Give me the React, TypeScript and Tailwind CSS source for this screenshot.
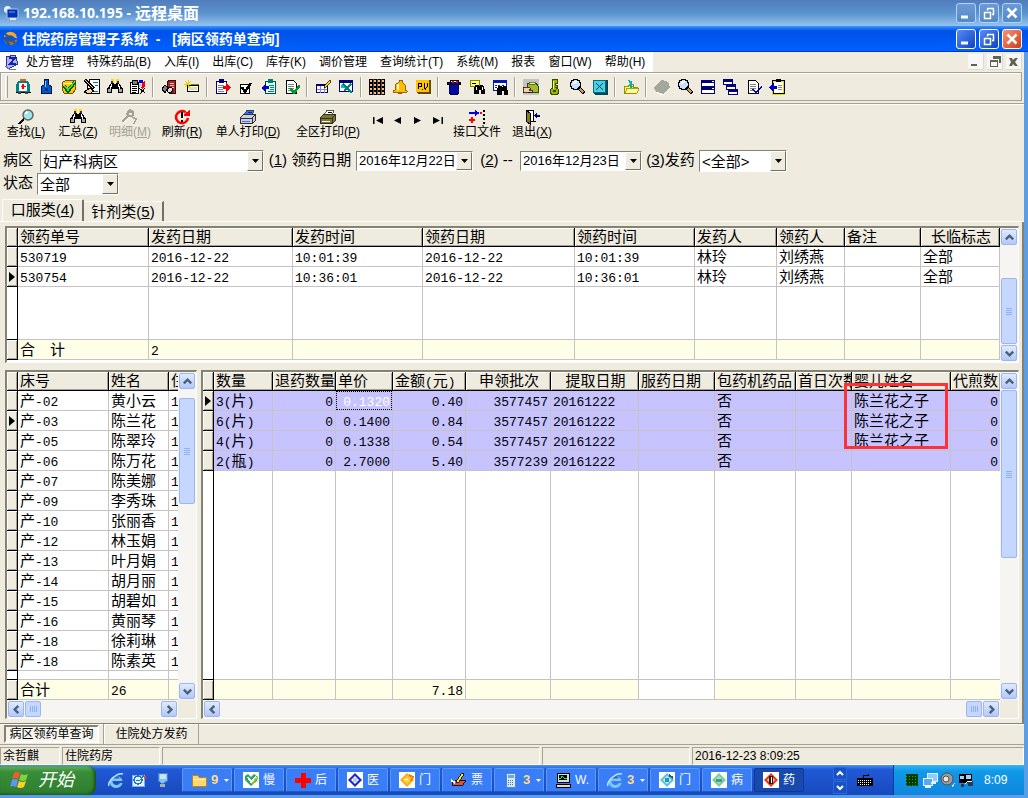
import { useState } from "react";
import type { ReactNode } from "react";
import clsx from "clsx";

const CJK = "font-['Liberation_Sans','Noto_Sans_CJK_SC',sans-serif]";

/* ---------- text helpers ---------- */

// latin runs are set in a narrower mono so they keep half the width of a han character
function Mixed({ text }: { text: string }) {
  return (
    <>
      {text.split(/([\x21-\x7e]+)/).map((part, i) =>
        i % 2 ? (
          <span key={i} className="font-['Liberation_Mono',monospace] text-[13px]">{part}</span>
        ) : (
          part
        )
      )}
    </>
  );
}

function Key({ text, k }: { text: string; k: string }) {
  return (
    <span>
      {text}(<u>{k}</u>)
    </span>
  );
}

/* ---------- icons ---------- */

function Ico({ children, className = "w-4 h-4" }: { children: ReactNode; className?: string }) {
  return (
    <svg viewBox="0 0 16 16" className={clsx("shrink-0", className)} shapeRendering="crispEdges" aria-hidden="true">
      {children}
    </svg>
  );
}

const sheet = (
  <>
    <path d="M2.500 1.500h7l3 3v10h-10z" fill="#fff" stroke="#000" />
    <path d="M4 5h6M4 7h6M4 9h6M4 11h5" stroke="#848284" />
  </>
);

const binoculars = (
  <>
    <path d="M4 0h3v4H4zM9 0h3v4H9z" fill="#ffdf00" />
    <path d="M4 2h2v2H4zM10 2h2v2h-2z" fill="#2930a5" />
    <path d="M4 4h3l1 2 1-2h3l4 6v4h-5v-4H5v4H0v-4z" fill="#000" />
    <path d="M5 5l-2 5M11 5l2 5" stroke="#fff" />
    <path d="M1 10h3v3H1zM12 10h3v3h-3z" fill="#a5a6b5" />
  </>
);

const magnifier = (
  <>
    <circle cx="6.500" cy="5.500" r="5" fill="#c6dfff" stroke="#000" strokeWidth="1.500" />
    <path d="M4 5l2-2h2" fill="none" stroke="#fff" strokeWidth="1.500" />
    <path d="M9.500 8.500l6 6" stroke="#000" strokeWidth="3.500" />
    <path d="M11 10l3.500 3.500" stroke="#ce9a63" strokeWidth="1.500" />
  </>
);

const icons: Record<string, ReactNode> = {
  急救: (
    <>
      <path d="M5 0h6v2H5z" fill="#f75500" />
      <path d="M3 2h10l2 4v7H1V6z" fill="#008284" />
      <path d="M4 4h8v8H4z" fill="#fff" />
      <path d="M8 5v5M5.500 7.500h5" stroke="#f00" strokeWidth="1.500" />
      <path d="M1 13h15v1H1z" fill="#000" />
      <path d="M3 13h3v2H3zM10 13h3v2h-3z" fill="#424142" />
    </>
  ),
  药瓶: (
    <>
      <path d="M6.500 0.500h4v5l3 2v7h-10v-7l3-2z" fill="#0059c6" stroke="#00104a" />
      <path d="M7 2h1v6H7z" fill="#8cc7ff" />
      <path d="M7 9h3v3H7z" fill="#00307b" />
    </>
  ),
  审核: (
    <>
      <path d="M1.500 3.500l3-2h10v9l-3 4h-8l-2-3z" fill="#ffc600" stroke="#735100" />
      <path d="M2 4h12" stroke="#fff7a5" />
      <path d="M3 7l4 5 7-9" fill="none" stroke="#005d00" strokeWidth="3.500" />
      <path d="M3.500 7l3.500 4 6.500-8" fill="none" stroke="#42db42" strokeWidth="1.500" />
    </>
  ),
  处方: (
    <>
      <path d="M5.500 0.500h10v14h-12v-6z" fill="#fff" stroke="#000" />
      <path d="M9 3h5M11 6h3M10 12h4" stroke="#008284" />
      <path d="M1 1l9 9" stroke="#000" strokeWidth="3" />
      <path d="M1.500 1.500l8 8" stroke="#ffdb63" />
      <path d="M0 13l6-4 4 3-5 3z" fill="#ffcf9c" stroke="#000" />
    </>
  ),
  检索: binoculars,
  药单: (
    <>
      <path d="M0.500 3.500h8v11h-8z" fill="#fff" stroke="#000" />
      <path d="M2 1h5v4H2z" fill="#848284" stroke="#000" />
      <path d="M2 7h5M2 9h5M2 11h5M2 13h4" stroke="#000" />
      <path d="M9 1h4v3h-4z" fill="#00f" />
      <path d="M10 6l5-4v6l-3 2z" fill="#f00" />
      <path d="M9 9l6 5M15 9l-5 6" stroke="#000" />
      <path d="M9 5h3v3H9z" fill="#adcfef" />
    </>
  ),
  查册: (
    <>
      <path d="M8 1h6v13H8l-2-3V4z" fill="#9c2829" stroke="#420000" />
      <path d="M9 4h4M9 6h4M9 8h4" stroke="#ffb6b5" />
      <path d="M1 10l3-4 3 3-3 5z" fill="#848284" stroke="#000" />
      <circle cx="9" cy="11" r="2.500" fill="#dedfde" stroke="#000" />
    </>
  ),
  新建: (
    <>
      <path d="M3.500 6.500h11v6h-11z" fill="#fff" stroke="#000" />
      <path d="M5 8h8v3H5z" fill="#dedfbd" />
      <path d="M4 1v8M0 5h7M1 2l5 6M7 2L1 8" stroke="#e7cf00" />
      <path d="M7 5h8" stroke="#848200" />
    </>
  ),
  出库单: (
    <>
      <path d="M1.500 2.500h10v12h-10z" fill="#fff" stroke="#00007b" strokeWidth="1.500" />
      <path d="M4 0h5v4H4z" fill="#00007b" />
      <path d="M3 6h6M3 8h5M3 10h5M3 12h6" stroke="#848284" />
      <path d="M8 7h3V4l5 5-5 4v-3H8z" fill="#f00008" />
    </>
  ),
  确认: (
    <>
      <path d="M2.500 5.500h9v9h-9z" fill="#fff" stroke="#000" />
      <path d="M4 8l3 5 6-9" fill="none" stroke="#000" strokeWidth="2.500" />
    </>
  ),
  入库单: (
    <>
      <path d="M4.500 2.500h10v12h-10z" fill="#deffef" stroke="#00514a" strokeWidth="1.500" />
      <path d="M7 0h5v4H7z" fill="#007b73" />
      <path d="M8 6h5M9 8h4M9 10h4M7 12h6" stroke="#008284" />
      <path d="M8 7H5V4L0 9l5 4v-3h3z" fill="#0000bd" />
    </>
  ),
  验收: (
    <>
      {sheet}
      <path d="M6 9l4 5 6-8" fill="none" stroke="#009a29" strokeWidth="2.500" />
    </>
  ),
  编辑表: (
    <>
      <path d="M1.500 5.500h11v8h-11z" fill="#fff" stroke="#00007b" strokeWidth="1.500" />
      <path d="M1 5h12v2H1z" fill="#00007b" />
      <path d="M2 10h10M5 7v7M9 7v7" stroke="#8486c6" />
      <path d="M9 9l1-3 5-5 1 2-5 5z" fill="#ffd700" stroke="#000" strokeWidth=".7" />
    </>
  ),
  绘图: (
    <>
      <path d="M1.500 2.500h13v10h-13z" fill="#fff" stroke="#00007b" />
      <path d="M1 1h14v3H1z" fill="#00007b" />
      <path d="M3 6h4v3H3z" fill="#00c3c6" />
      <path d="M5 5l9 9M13 5l-7 7" stroke="#008284" strokeWidth="2" />
    </>
  ),
  网格: (
    <>
      <path d="M0 0h16v16H0z" fill="#000" />
      {[1, 5, 9, 13].map((y) => (
        <path key={y} d={`M1 ${y}h2v2H1zM5 ${y}h2v2H5zM9 ${y}h2v2H9zM13 ${y}h2v2h-2z`} fill="#ffbe6b" />
      ))}
      <path d="M4 0v16M8 0v16M12 0v16" stroke="#848284" strokeWidth=".6" />
    </>
  ),
  提醒: (
    <>
      <path d="M7 1h3v2l3 3v5l2 1v1H1v-1l2-1V6l4-3z" fill="#ffbe00" stroke="#7b4900" strokeWidth=".8" />
      <path d="M6 5v6" stroke="#fff7bd" strokeWidth="1.500" />
      <path d="M6 13h4v2H6z" fill="#a55900" />
    </>
  ),
  价格: (
    <>
      <path d="M1 1h15v14H3l-2-2z" fill="#634900" />
      <path d="M1 1h13v12H1z" fill="#ffc300" />
      <path d="M3 10V4h3v3H3M9 4v4l1.500 2L12 8V4M7 10h1" fill="none" stroke="#000" />
    </>
  ),
  回收: (
    <>
      <path d="M3 5h10l-1 10H4z" fill="#0008a5" stroke="#000042" />
      <path d="M1.500 3.500h13v2h-13z" fill="#0008a5" stroke="#000" />
      <path d="M4 1h8v2H4z" fill="#fff" stroke="#000" />
      <path d="M6 2h2v2H6zM10 2h2v2h-2z" fill="#f00" />
    </>
  ),
  查药: (
    <>
      <path d="M1.500 1.500h9v6h-9z" fill="#ffff7b" stroke="#848200" />
      <path d="M3 4h4" stroke="#000" />
      <path d="M6 6h3l1 1 1-1h3l2 5v4h-4v-4h-2v4H5v-5z" fill="#000" />
      <path d="M7 8v3M13 8v3" stroke="#fff" />
    </>
  ),
  查表: (
    <>
      <path d="M1.500 1.500h13v10h-13z" fill="#fff" stroke="#0018bd" />
      <path d="M1 1h14v3H1z" fill="#0018bd" />
      <path d="M3 6h2M6 6h2M10 6h2M3 8h2" stroke="#0018bd" />
      <path d="M6 7h3l1 1 1-1h3l2 5v4h-4v-4h-2v4H5v-5z" fill="#000" />
    </>
  ),
  付款: (
    <>
      <path d="M0 0h16v16H0z" fill="#c6c3c6" />
      <path d="M4 4h9l2 3v6H5z" fill="#a5b631" stroke="#314900" />
      <path d="M6 3h6v2H6z" fill="#e7ef9c" stroke="#314900" strokeWidth=".6" />
      <path d="M0 8h5l3 2-2 1h3v2H3l-3 1z" fill="#ffcf9c" stroke="#000" strokeWidth=".7" />
    </>
  ),
  钥匙: (
    <>
      <path d="M6 0.500h5v4H9.500v2H11v2H9.500l3 2v4l-2 1H6l-2-2v-3l2-1z" fill="#9cb600" stroke="#394900" />
      <path d="M7 2v8" stroke="#efff7b" />
      <path d="M7 11h3v2H7z" fill="#394900" />
    </>
  ),
  搜索: magnifier,
  关闭表: (
    <>
      <path d="M1 1h15v15H3l-2-2z" fill="#004952" />
      <path d="M1.500 1.500h12v12h-12z" fill="#4acfe7" stroke="#006d7b" />
      <path d="M4 4l7 7M11 4l-7 7" stroke="#003952" />
    </>
  ),
  打开: (
    <>
      <path d="M1.500 7.500h4l1-2h4v3h4l-2 6h-11z" fill="#ffff5a" stroke="#948e00" />
      <path d="M2 14l2-5h12l-2 5z" fill="#fff79c" stroke="#948e00" strokeWidth=".8" />
      <path d="M5 1l4 1v5l2-1-3 4-2-4h2z" fill="#00aec6" />
    </>
  ),
  停用: (
    <>
      <path d="M0 8l8-7 6 2 2 5-7 7-8-3z" fill="#a5a69c" />
      <path d="M1 13l8 3 7-7" fill="none" stroke="#fff" />
    </>
  ),
  平铺: (
    <>
      <path d="M1.500 1.500h13v6h-13zM1.500 8.500h13v6h-13z" fill="#fff" stroke="#00007b" />
      <path d="M1 1h14v3H1zM1 8h14v3H1z" fill="#00007b" />
      <path d="M12 2h2M12 9h2" stroke="#fff" />
    </>
  ),
  层叠: (
    <>
      {[0, 1, 2].map((n) => (
        <g key={n} transform={`translate(${n * 2.5} ${n * 5})`}>
          <path d="M.5 0.500h9v5h-9z" fill="#fff" stroke="#00007b" />
          <path d="M0 0h10v3H0z" fill="#00007b" />
        </g>
      ))}
    </>
  ),
  完成: (
    <>
      {sheet}
      <path d="M7 10l3 4 6-7" fill="none" stroke="#0000bd" strokeWidth="1.500" />
    </>
  ),
  导入: (
    <>
      <path d="M4 2h11v13H4z" fill="#fff" stroke="#dede00" strokeWidth="2" />
      <path d="M3.500 5V1.500h12v13H4V12" fill="none" stroke="#000" />
      <path d="M7 0h5v3H7z" fill="#000" />
      <path d="M9 6h4M9 8h4M9 10h4" stroke="#848284" />
      <path d="M8 7H5V4L0 8.500 5 13v-3h3z" fill="#0000bd" />
    </>
  ),
};

const toolGroups = [
  ["急救", "药瓶", "审核", "处方", "检索", "药单"],
  ["查册", "新建"],
  ["出库单", "确认", "入库单", "验收"],
  ["编辑表", "绘图"],
  ["网格", "提醒", "价格"],
  ["回收", "查药", "查表"],
  ["付款", "钥匙", "搜索", "关闭表"],
  ["打开"],
  ["停用", "搜索", "平铺", "层叠", "完成", "导入"],
];

const printer = (body: string, paper: string, ink: string) => (
  <>
    <path d="M4 6l3-5h7l-2 5z" fill={paper} stroke="#31302a" strokeWidth=".8" />
    <path d="M8 3h4M7 5h4" stroke={ink} />
    <path d="M0.500 8.500l3-3h12v6l-3 3h-12z" fill={body} stroke="#31302a" />
    <path d="M1 9h11l3-3M12.500 9v5" fill="none" stroke="#31302a" />
    <path d="M2 12h8" stroke={paper} />
  </>
);

const actions = {
  find: (
    <>
      <circle cx="10" cy="6" r="5" fill="#9ce7e7" stroke="#636163" strokeWidth="1.500" shapeRendering="auto" />
      <path d="M7 5l2-2" stroke="#fff" strokeWidth="1.500" />
      <path d="M6 9.500L1 15" stroke="#000" strokeWidth="2" />
    </>
  ),
  detail: (
    <>
      <path d="M5 2l3-2 4 2v5l-2 1H6L4 6z" fill="#a5a294" />
      <path d="M7 4h3v2H7z" fill="#efebde" />
      <path d="M6 7l-6 6M10 8l4 2-2 5" fill="none" stroke="#a5a294" strokeWidth="1.500" />
      <path d="M1 14l6-5M13 15h2" stroke="#fff" />
    </>
  ),
  refresh: (
    <>
      <path d="M11.500 3.200A6 6 0 1 0 14 9" fill="none" stroke="#f00" strokeWidth="2.500" shapeRendering="auto" />
      <path d="M10 5.500L15.500 1v6h-5z" fill="#f00" />
      <path d="M6.500 3h3L8.500 9h-1zM7 10.500h2v2H7z" fill="#000" />
    </>
  ),
  port: (
    <>
      <path d="M0 4h7" stroke="#00f" strokeWidth="2" />
      <path d="M6 1l5 3-5 3z" fill="#00f" />
      <path d="M14.500 1v15" stroke="#000" strokeWidth="2" strokeDasharray="2 2" />
      <path d="M11 3h2v2h-2z" fill="#f00" />
      <path d="M3 8v6M0 11h6" stroke="#f00" strokeWidth="2" />
    </>
  ),
  exit: (
    <>
      <path d="M2.500 1.500h7v11h-7z" fill="#fff" stroke="#000" />
      <path d="M2.500 1.500l4 3v11l-4-3z" fill="#848200" stroke="#000" />
      <path d="M8 12.500h4" stroke="#000" />
      <path d="M10 6.500l3-3v2h3v2h-3v2z" fill="#00007b" />
    </>
  ),
};

/* ---------- window chrome ---------- */

function Caption({ kind, tone }: { kind: "min" | "max" | "close"; tone: string }) {
  return (
    <button aria-label={kind} className={clsx("w-5 h-5 rounded-[3px] border flex items-center justify-center", tone)}>
      <svg viewBox="0 0 14 14" className="w-[14px] h-[14px]" fill="none" stroke="#fff" aria-hidden="true">
        {kind === "min" && <path d="M2 11h7" strokeWidth="3" />}
        {kind === "max" && (
          <>
            <path d="M2 6.500h7M2.500 6v6.500h6V6" strokeWidth="1.500" />
            <path d="M5 2.500h7M11.500 3v5.500H10M5.500 3v1.500" strokeWidth="1.500" />
          </>
        )}
        {kind === "close" && <path d="M2.500 2.500l9 9M11.500 2.500l-9 9" strokeWidth="2.500" />}
      </svg>
    </button>
  );
}

function Titles() {
  const glass = "border-[#b5d3f7] bg-linear-to-b from-[#6b9ad6] to-[#528ac6]";
  const blue = "border-white bg-linear-to-br from-[#5a8af7] to-[#0841c6]";
  return (
    <>
      <div className="h-[26px] flex items-center pl-[3px] pr-1.5 bg-linear-to-b from-[#527dbd] via-[#5a92ce] to-[#94c3ef]">
        <svg viewBox="0 0 16 16" className="w-4 h-4 mr-1 shrink-0" aria-hidden="true">
          <circle cx="4.500" cy="4.500" r="3.500" fill="#e7f3ff" />
          <rect x="4" y="4" width="11" height="9" rx="1" fill="#0030b5" stroke="#b5c7e7" />
          <path d="M6 7h6" stroke="#5aa6ff" />
          <path d="M7 14h6" stroke="#e7e7e7" strokeWidth="2" />
        </svg>
        <h1 className="flex-1 text-white font-bold text-[14px] font-['Noto_Sans','Noto_Sans_CJK_SC',sans-serif] leading-6 flex items-center gap-1">
          <span>192.168.10.195 -</span>
          <span className="text-[16px]">远程桌面</span>
        </h1>
        <div className="flex gap-[3px]">
          <Caption kind="min" tone={glass} />
          <Caption kind="max" tone={glass} />
          <Caption kind="close" tone={glass} />
        </div>
      </div>
      <div className="h-[26px] flex items-center pl-[3px] pr-1.5 bg-linear-to-b from-[#3994ff] via-[#0051e7] via-20% to-[#0061ff] border-b border-[#0038bd]">
        <svg viewBox="0 0 16 16" className="w-[15px] h-[15px] mr-1 shrink-0" aria-hidden="true">
          <path d="M1 6a7 6 0 0 1 13-2l1 4-3-1a5 5 0 0 0-8-1z" fill="#ffa621" />
          <path d="M15 9A7 6 0 0 1 2 12L1 8l3 1a5 5 0 0 0 8 1z" fill="#c66b10" />
          <path d="M2 3l11 10M1 7l6 8" stroke="#29598c" strokeWidth="2.500" />
        </svg>
        <h2 className="flex-1 text-white font-bold text-[14px] leading-6 whitespace-pre">
          住院药房管理子系统{"  -   "}[病区领药单查询]
        </h2>
        <div className="flex gap-[3px]">
          <Caption kind="min" tone={blue} />
          <Caption kind="max" tone={blue} />
          <Caption kind="close" tone="border-white bg-linear-to-br from-[#f79273] to-[#ce3810]" />
        </div>
      </div>
    </>
  );
}

const menu: [string, string?][] = [
  ["处方管理"],
  ["特殊药品", "B"],
  ["入库", "I"],
  ["出库", "C"],
  ["库存", "K"],
  ["调价管理"],
  ["查询统计", "T"],
  ["系统", "M"],
  ["报表"],
  ["窗口", "W"],
  ["帮助", "H"],
];

function MenuBar() {
  return (
    <nav className="h-5 flex items-center justify-between text-[12px] leading-5">
      <div className="bg-white flex items-center h-5 pl-1 pr-2">
        <Ico className="w-4 h-4 mr-1.5">
          <path d="M2 3l9-2 3 9-10 5-2-4z" fill="#adb6ff" stroke="#2930a5" />
          <path d="M5 4h6l-5 6h6" fill="none" stroke="#1820a5" strokeWidth="2" />
          <path d="M1 12l4 3h7" fill="none" stroke="#6b71c6" />
        </Ico>
        <div className="flex gap-[13px]">
          {menu.map(([text, key]) => (
            <button key={text} className="whitespace-nowrap">
              {key ? `${text}(${key})` : text}
            </button>
          ))}
        </div>
      </div>
      <div className="flex gap-[3px] pr-0.5">
        {["M3 10h6v2H3z", "M3 6h8v7H3zM4 8v4h6V8zM6 2h8v7h-2V5H6z", "M3 4h3l1 2 2-2h3L9 8l3 4H9L7 10l-1 2H3l2-4z"].map((d) => (
          <button key={d} aria-label="子窗口" className="w-4 h-4 bg-[#f7f7f7] border-r border-b border-[#dedbce]">
            <svg viewBox="0 0 15 15" className="w-[15px] h-[15px]" fill="#636152" fillRule="evenodd" aria-hidden="true">
              <path d={d} />
            </svg>
          </button>
        ))}
      </div>
    </nav>
  );
}

function ToolBar() {
  return (
    <div className="mr-0.5 border border-[#a5a294] shadow-[inset_1px_1px_0_#fff] h-[29px] flex items-center pl-1">
      <span className="w-[3px] h-[22px] border-l border-white border-r border-r-[#a5a294] mr-[3px]" />
      {toolGroups.map((group, g) => (
        <div key={g} className="flex items-center">
          {g > 0 && (
            <span className="w-2 h-5 flex justify-center">
              <span className="w-0.5 border-l border-[#a5a294] border-r border-r-white" />
            </span>
          )}
          {group.map((name) => (
            <button key={name} aria-label={name} className="w-[23px] h-5 flex items-center justify-center">
              <Ico>{icons[name]}</Ico>
            </button>
          ))}
        </div>
      ))}
    </div>
  );
}

function Action({ icon, children, className, disabled }: { icon: ReactNode; children: ReactNode; className: string; disabled?: boolean }) {
  return (
    <button
      disabled={disabled}
      className={clsx("flex flex-col items-center text-[12px] leading-[14px] whitespace-nowrap disabled:text-[#a5a294]", className)}
    >
      <Ico>{icon}</Ico>
      {children}
    </button>
  );
}

function ActionBar() {
  return (
    <div className="mt-0.5 border-t border-[#a5a294] shadow-[inset_0_1px_0_#fff] flex items-center pt-0.5 h-[38px]">
      <Action className="w-[52px]" icon={actions.find}><Key text="查找" k="L" /></Action>
      <Action className="w-[52px]" icon={binoculars}><Key text="汇总" k="Z" /></Action>
      <Action className="w-[52px]" icon={actions.detail} disabled><Key text="明细" k="M" /></Action>
      <Action className="w-[52px]" icon={actions.refresh}><Key text="刷新" k="R" /></Action>
      <Action className="w-20" icon={printer("#c6cfe7", "#3971e7", "#0028a5")}><Key text="单人打印" k="D" /></Action>
      <Action className="w-20" icon={printer("#7b7929", "#fff", "#000")}><Key text="全区打印" k="P" /></Action>
      {["M0 1h1.500v7H0zM10 1v7L3 4.500z", "M8 1v7L1 4.500z", "M1 1v7l7-3.500z", "M0 1v7l7-3.500zM8.500 1H10v7H8.500z"].map((d, i) => (
        <button key={d} aria-label={["首条", "上条", "下条", "末条"][i]} className="w-5 h-6 flex items-start justify-center">
          <svg viewBox="0 0 10 9" className="w-[10px] h-[9px] mt-1" aria-hidden="true"><path d={d} /></svg>
        </button>
      ))}
      <Action className="w-[58px]" icon={actions.port}>接口文件</Action>
      <Action className="w-[52px]" icon={actions.exit}><Key text="退出" k="X" /></Action>
    </div>
  );
}

/* ---------- filters ---------- */

const sunken = "border border-[#848273] border-r-white border-b-white bg-white";

function Arrow() {
  return (
    <span className="w-4 h-full bg-[#efebde] border border-white border-r-[#737163] border-b-[#737163] flex items-center justify-center">
      <svg viewBox="0 0 7 4" className="w-[7px] h-1" aria-hidden="true"><path d="M0 0h7L3.500 4z" /></svg>
    </span>
  );
}

function Combo({ id, options, className }: { id: string; options: string[]; className: string }) {
  return (
    <div className={clsx("relative h-[22px]", sunken, className)}>
      <select id={id} className="appearance-none w-full h-5 pl-0.5 leading-5 text-[15px] bg-transparent outline-none">
        {options.map((o) => <option key={o}>{o}</option>)}
      </select>
      <div className="absolute right-0 inset-y-0 pointer-events-none"><Arrow /></div>
    </div>
  );
}

function DateBox({ id, value, className }: { id: string; value: string; className: string }) {
  const [date, setDate] = useState(value);
  return (
    <div className={clsx("h-5 flex", sunken, className)}>
      <input
        id={id}
        value={date}
        onChange={(e) => setDate(e.target.value)}
        className="flex-1 min-w-0 pl-0.5 text-[13px] leading-4 outline-none"
      />
      <button aria-label="选择日期" className="h-full"><Arrow /></button>
    </div>
  );
}

function Filters() {
  return (
    <form className="px-[3px] pt-2 text-[15px] whitespace-nowrap" onSubmit={(e) => e.preventDefault()}>
      <div className="flex items-center h-[23px]">
        <label htmlFor="ward" className="w-[37px]">病区</label>
        <Combo id="ward" options={["妇产科病区", "内科病区"]} className="w-[224px]" />
        <label htmlFor="from" className="w-[92px] text-center">(<u>1</u>) 领药日期</label>
        <DateBox id="from" value="2016年12月22日" className="w-[117px]" />
        <label htmlFor="to" className="w-[47px] text-center">(<u>2</u>) --</label>
        <DateBox id="to" value="2016年12月23日" className="w-[122px]" />
        <label htmlFor="sent" className="w-[57px] text-center">(<u>3</u>)发药</label>
        <Combo id="sent" options={["<全部>", "<已发>"]} className="w-[88px]" />
      </div>
      <div className="flex items-center h-[23px]">
        <label htmlFor="state" className="w-[34px]">状态</label>
        <Combo id="state" options={["全部", "在院"]} className="w-[82px]" />
      </div>
    </form>
  );
}

function Tabs() {
  return (
    <div className="flex items-end h-[27px] pl-0.5 text-[15px] leading-[18px] border-b border-white" role="tablist">
      <button role="tab" aria-selected="true" className="w-[82px] h-[22px] pb-0.5 rounded-t-xs border-t border-l border-white border-r-2 border-r-[#737163]">
        口服类(<u>4</u>)
      </button>
      <button role="tab" aria-selected="false" className="w-20 h-5 border-t border-white border-r-2 border-r-[#737163]">
        针剂类(<u>5</u>)
      </button>
    </div>
  );
}

/* ---------- grids ---------- */

type Col = { title: string; w: string; align?: string; head?: string; noSum?: boolean };

function Chevron({ dir }: { dir: "up" | "down" | "left" | "right" }) {
  const d = { up: "M1.500 6L4.500 3l3 3", down: "M1.500 3l3 3 3-3", left: "M6 1.500L3 4.500l3 3", right: "M3 1.500l3 3-3 3" }[dir];
  return (
    <button
      aria-label={dir}
      className="w-4 h-4 m-px shrink-0 rounded-xs border border-[#9cb6ef] bg-linear-to-b from-[#deebff] to-[#b5c7f7] flex items-center justify-center"
    >
      <svg viewBox="0 0 9 9" className="w-[11px] h-[11px]" fill="none" stroke="#4a617b" strokeWidth="2" aria-hidden="true">
        <path d={d} />
      </svg>
    </button>
  );
}

function VScroll({ gap, thumb }: { gap: string; thumb: string }) {
  return (
    <div className="w-[18px] shrink-0 flex flex-col bg-[#f7f5f2]">
      <Chevron dir="up" />
      <div className={gap} />
      <div className={clsx("mx-px w-4 rounded-xs border border-[#9cb6ef] bg-[#c6d7ff] flex flex-col gap-px items-center justify-center", thumb)}>
        {[0, 1, 2, 3].map((n) => <span key={n} className="w-1.5 h-px bg-[#8cb2f7]" />)}
      </div>
      <div className="flex-1" />
      <Chevron dir="down" />
    </div>
  );
}

function HThumb() {
  return (
    <div className="w-4 h-4 my-px rounded-xs border border-[#9cb6ef] bg-[#c6d7ff] flex gap-px items-center justify-center">
      {[0, 1, 2, 3].map((n) => <span key={n} className="w-px h-1.5 bg-[#8cb2f7]" />)}
    </div>
  );
}

const rowHead = "bg-[#efebde] border-r border-b border-black shadow-[inset_1px_1px_0_#fff,inset_-1px_-1px_0_#a5a294]";
const cellBase = "p-0 border-r border-b border-[#c6c3c6]";
const cellText = "h-[19px] px-0.5 leading-[19px] overflow-hidden whitespace-pre";

function Grid({
  cols, rows, sums, current, filler, selected, focus,
}: {
  cols: Col[];
  rows: string[][];
  sums: string[];
  current: number;
  filler: string;
  selected?: boolean;
  focus?: number;
}) {
  return (
    <div className="flex-1 min-w-0 overflow-hidden">
      <table className="table-fixed w-px border-separate border-spacing-0 text-[15px] text-left">
        <colgroup>
          <col className="w-[11px]" />
          {cols.map((c, i) => <col key={i} className={c.w} />)}
        </colgroup>
        <thead>
          <tr>
            <th className={clsx("p-0", rowHead)} aria-label="当前行" />
            {cols.map((c, i) => (
              <th key={i} className={clsx("p-0 font-normal", rowHead, c.head)}>
                <div className="h-[18px] pl-0.5 leading-[18px] overflow-hidden whitespace-nowrap">
                  <Mixed text={c.title} />
                </div>
              </th>
            ))}
          </tr>
        </thead>
        <tbody>
          {rows.map((row, r) => (
            <tr key={r} className={selected ? "bg-[#c6c3ff]" : "bg-white"}>
              <th className={clsx("p-0", rowHead)} aria-label={r === current ? "当前" : "行"}>
                {r === current && (
                  <svg viewBox="0 0 6 10" className="w-1.5 h-[10px] mx-auto" aria-hidden="true"><path d="M0 0v10l6-5z" /></svg>
                )}
              </th>
              {row.map((v, c) => (
                <td key={c} className={clsx(cellBase, cols[c].align)}>
                  <div className={clsx(cellText, r === current && c === focus && "text-white outline outline-dotted -outline-offset-1 outline-black")}>
                    <Mixed text={v} />
                  </div>
                </td>
              ))}
            </tr>
          ))}
          <tr className="bg-white">
            <td className={clsx("p-0 border-r border-black border-b", filler)} />
            {cols.map((_, i) => <td key={i} className="p-0 border-r border-b border-[#c6c3c6]" />)}
          </tr>
        </tbody>
        <tfoot>
          <tr className="bg-[#ffffe7]">
            <td className={clsx("p-0", rowHead)} />
            {cols.map((c, i) => (
              <td key={i} className={clsx(cellBase, c.align, c.noSum && "bg-white")}>
                <div className={cellText}><Mixed text={sums[i] ?? ""} /></div>
              </td>
            ))}
          </tr>
        </tfoot>
      </table>
    </div>
  );
}

const orderCols: Col[] = [
  { title: "领药单号", w: "w-[131px]" },
  { title: "发药日期", w: "w-[144px]" },
  { title: "发药时间", w: "w-[130px]" },
  { title: "领药日期", w: "w-[152px]" },
  { title: "领药时间", w: "w-[120px]" },
  { title: "发药人", w: "w-[82px]" },
  { title: "领药人", w: "w-[68px]" },
  { title: "备注", w: "w-[76px]" },
  { title: "长临标志", w: "w-[79px]", head: "text-center" },
];

const orders = [
  ["530719", "2016-12-22", "10:01:39", "2016-12-22", "10:01:39", "林玲", "刘绣燕", "", "全部"],
  ["530754", "2016-12-22", "10:36:01", "2016-12-22", "10:36:01", "林玲", "刘绣燕", "", "全部"],
];

const bedCols: Col[] = [
  { title: "床号", w: "w-[91px]" },
  { title: "姓名", w: "w-[60px]" },
  { title: "住", w: "w-[12px]" },
];

const beds = [
  ["产-02", "黄小云"], ["产-03", "陈兰花"], ["产-05", "陈翠玲"], ["产-06", "陈万花"], ["产-07", "陈美娜"],
  ["产-09", "李秀珠"], ["产-10", "张丽香"], ["产-12", "林玉娟"], ["产-13", "叶月娟"], ["产-14", "胡月丽"],
  ["产-15", "胡碧如"], ["产-16", "黄丽琴"], ["产-18", "徐莉琳"], ["产-18", "陈素英"],
].map((b) => [...b, "1"]);

const drugCols: Col[] = [
  { title: "数量", w: "w-[59px]" },
  { title: "退药数量", w: "w-[63px]", align: "text-right" },
  { title: "单价", w: "w-[57px]", align: "text-right" },
  { title: "金额(元)", w: "w-[73px]", align: "text-right" },
  { title: "申领批次", w: "w-[85px]", align: "text-right", head: "text-center" },
  { title: "提取日期", w: "w-[88px]", head: "text-center" },
  { title: "服药日期", w: "w-[76px]", noSum: true },
  { title: "包药机药品", w: "w-[81px]" },
  { title: "首日次数", w: "w-[56px]" },
  { title: "婴儿姓名", w: "w-[99px]" },
  { title: "代煎数", w: "w-[50px]", align: "text-right" },
];

const drugs = [
  ["3(片)", "0", "0.1320", "0.40", "3577457", "20161222", "", "否", "", "陈兰花之子", "0"],
  ["6(片)", "0", "0.1400", "0.84", "3577457", "20161222", "", "否", "", "陈兰花之子", "0"],
  ["4(片)", "0", "0.1338", "0.54", "3577457", "20161222", "", "否", "", "陈兰花之子", "0"],
  ["2(瓶)", "0", "2.7000", "5.40", "3577239", "20161222", "", "否", "", "", "0"],
];

const frame = "border-t-2 border-l-2 border-[#848273] border-r border-b border-r-white border-b-white";

function Grids() {
  return (
    <div className="border-r-2 border-[#848273] pl-[5px] pr-[3px] pt-1 pb-1 shrink-0">
      <div className={clsx("flex bg-white", frame)}>
        <Grid cols={orderCols} rows={orders} sums={["合　计", "2"]} current={1} filler="h-[53px]" />
        <VScroll gap="h-8" thumb="h-[66px]" />
      </div>
      <div className="flex gap-1 pt-[7px]">
        <div className={clsx("w-[192px] bg-white", frame)}>
          <div className="flex">
            <Grid cols={bedCols} rows={beds} sums={["合计", "26"]} current={1} filler="h-[9px]" />
            <VScroll gap="h-2" thumb="h-[106px]" />
          </div>
          <div className="flex h-[18px] bg-[#f7f5f2]">
            <Chevron dir="left" />
            <HThumb />
            <div className="flex-1" />
            <Chevron dir="right" />
            <div className="w-[18px] bg-[#efebde]" />
          </div>
        </div>
        <div className={clsx("relative flex-1 min-w-0 bg-white", frame)}>
          <div className="flex">
            <Grid cols={drugCols} rows={drugs} sums={["", "", "", "7.18"]} current={0} filler="h-[209px]" selected focus={2} />
            <VScroll gap="" thumb="h-[168px]" />
          </div>
          <div className="absolute left-[641px] top-[11px] w-[104px] h-[66px] border-[3px] border-[#ff3038]" />
          <div className="flex h-[18px] bg-[#f7f5f2]">
            <Chevron dir="left" />
            <div className="flex-1" />
            <HThumb />
            <Chevron dir="right" />
            <div className="w-[18px] bg-[#efebde]" />
          </div>
        </div>
      </div>
    </div>
  );
}

/* ---------- bottom bars ---------- */

function WindowTabs() {
  return (
    <div className="h-[22px] border-t border-[#848273] shadow-[inset_0_1px_0_#fff] border-b border-b-[#a5a294] flex items-center text-[12px] leading-4 pl-1">
      <button className="w-[95px] h-[18px] bg-[#f7f5ef] border-2 border-[#848273] border-r-white border-b-white leading-[14px] whitespace-nowrap">
        病区领药单查询
      </button>
      <span className="w-0.5 h-5 ml-1 border-l border-[#a5a294] border-r border-r-white" />
      <button className="w-[94px] h-5 border-r border-[#a5a294]">住院处方发药</button>
    </div>
  );
}

function StatusBar() {
  const cell = "border border-[#a5a294] border-r-white border-b-white px-0.5 whitespace-nowrap";
  return (
    <div className="h-5 pt-0.5 flex gap-0.5 text-[12px] leading-4">
      <span className={clsx("w-[60px]", cell)}>余哲麒</span>
      <span className={clsx("w-[98px]", cell)}>住院药房</span>
      <span className={clsx("w-[378px]", cell)} />
      <span className={clsx("w-[148px]", cell)} />
      <span className={clsx("flex-1", cell)}>2016-12-23 8:09:25</span>
    </div>
  );
}

const ie = (
  <g shapeRendering="auto">
    <path d="M13 9H4.500a4 4 0 0 0 7.500 2h2.500A6.500 6 0 1 1 14.500 9z" fill="#7bc7ff" />
    <path d="M5 6.500h6.500a3.300 3 0 0 0-6.500 0z" fill="#2961c6" />
    <path d="M1 14C-1 10 9 0 15 2" fill="none" stroke="#bde3ff" strokeWidth="1.500" />
  </g>
);

const diamond = (a: string, b: string) => (
  <>
    <path d="M0 0h16v16H0z" fill="#fff" />
    <g shapeRendering="auto">
      <path d="M8 1l7 7-7 7-7-7z" fill={a} />
      <path d="M8 4l4 4-4 4-4-4z" fill={b} />
    </g>
  </>
);

const tasks: { icon: ReactNode; text: string; count?: boolean; active?: boolean }[] = [
  {
    text: "9", count: true,
    icon: <><path d="M1 3h6l1 2h7v9H1z" fill="#ffd76b" stroke="#b58621" /><path d="M2 7h12" stroke="#fff3c6" /></>,
  },
  {
    text: "慢",
    icon: <><path d="M0 0h16v16H0z" fill="#fff" /><path d="M8 14L2 8V4l3-2 3 3 3-3 4 3-1 4z" fill="#29a663" shapeRendering="auto" /><path d="M5 5l3 5 5-5" fill="none" stroke="#fff" strokeWidth="2" /><path d="M9 12l5-6" stroke="#8cc731" strokeWidth="2" /></>,
  },
  { text: "后", icon: <path d="M6 1h5v5h5v5h-5v5H6v-5H0V6h6z" fill="#f00" /> },
  { text: "医", icon: <>{diamond("#2128c6", "#fff")}<circle cx="8" cy="8" r="2.500" fill="#b5cfff" /></> },
  { text: "门", icon: <>{diamond("#ffae10", "#ffd242")}<path d="M10 3l4 2-2 4" fill="none" stroke="#e78200" strokeWidth="2" /><path d="M5 7h4" stroke="#fff" /></> },
  {
    text: "票",
    icon: <><path d="M1 11l5-3h9l-3 5H1z" fill="#de5131" stroke="#000" strokeWidth=".8" /><path d="M6 8l5-7 2 1-5 8-3 1z" fill="#ffe731" stroke="#000" strokeWidth=".8" /><path d="M0 8l4 3" stroke="#fff" strokeWidth="2" /></>,
  },
  {
    text: "3", count: true,
    icon: <><path d="M3 1h9l1 14H4z" fill="#d6e7f7" stroke="#5286c6" /><path d="M5 3h6v3H5z" fill="#6ba6e7" /><path d="M5 8h6M5 10h6M5 12h6" stroke="#4a7dbd" strokeDasharray="1 1" /></>,
  },
  {
    text: "W.",
    icon: <><path d="M2 1h12v9H2z" fill="#dedbd6" stroke="#000" /><path d="M4 3h8v5H4z" fill="#000" /><path d="M4 6h2l1-2 2 2h3" fill="none" stroke="#00ff4a" /><path d="M1 12h14v3H1z" fill="#dedbd6" stroke="#000" /></>,
  },
  { text: "3", count: true, icon: ie },
  { text: "门", icon: <>{diamond("#5ac3de", "#d6f3ff")}<path d="M6 6h4v4H6z" fill="#2992b5" /><path d="M10 3l4 3" stroke="#31518c" strokeWidth="2" /></> },
  { text: "病", icon: <>{diamond("#7bcf9c", "#a5e3bd")}<path d="M5 7h6v3H5z" fill="#4a9a8c" /></> },
  { text: "药", active: true, icon: <>{diamond("#e7381a", "#ffc7b5")}<path d="M6 4h4v8H6z" fill="#31180e" /><path d="M8 5v6" stroke="#fff" /></> },
];

function Taskbar() {
  return (
    <footer className="h-[30px] flex items-center text-white bg-linear-to-b from-[#4a92f7] via-[#2159d6] via-15% to-[#1849bd]">
      <button className="w-24 h-[29px] rounded-r-lg bg-linear-to-b from-[#63b263] via-[#398e39] via-20% to-[#2e7d2e] shadow-[inset_-2px_-1px_3px_#1c4f1c] flex items-center pl-2.5 gap-2 italic text-[18px] leading-7">
        <svg viewBox="0 0 20 18" className="w-5 h-[18px]" aria-hidden="true">
          <path d="M4 2q3-2 6 0L8 8q-3-2-6 0z" fill="#f7592e" />
          <path d="M11 3q3 2 7 0l-2 6q-3 2-7 0z" fill="#84d33a" />
          <path d="M2 9q3-2 6 0l-2 7q-3-2-6 0z" fill="#5a96f7" />
          <path d="M9 10q3 2 7 0l-2 6q-4 2-7 0z" fill="#ffcf29" />
        </svg>
        开始
      </button>
      <div className="flex gap-[7px] pl-3 w-[86px] items-center">
        <button aria-label="浏览器"><Ico>{ie}</Ico></button>
        <button aria-label="邮件">
          <Ico>
            <path d="M1 3h12v11H1z" fill="#e7f3ff" stroke="#7bb2e7" />
            <circle cx="7" cy="8" r="4" fill="none" stroke="#1871d6" strokeWidth="1.500" />
            <path d="M5 8h4l5-6" fill="none" stroke="#1871d6" />
            <path d="M13 4h2v3h-2z" fill="#ef4910" />
          </Ico>
        </button>
        <button aria-label="桌面">
          <Ico>
            <path d="M4 1h9v8l-4 3-5-3z" fill="#84c3f7" stroke="#4a82c6" />
            <path d="M6 2h6v5H6z" fill="#c6e7ff" />
            <path d="M6 12h5v3H6z" fill="#adaeb5" />
          </Ico>
        </button>
      </div>
      <div className="flex gap-0.5 flex-1 min-w-0">
        {tasks.map((t, i) => (
          <button
            key={i}
            className={clsx(
              "w-[50px] h-6 rounded-xs flex items-center pl-2 gap-1 text-[12px] border",
              t.active ? "bg-[#184aad] border-[#10389c]" : "bg-[#397df7] border-[#5a9aff] border-b-[#2159c6]"
            )}
          >
            <Ico>{t.icon}</Ico>
            <span className={clsx(t.count && "font-bold text-[13px] text-[#ffdb84]")}>{t.text}</span>
            {t.count && (
              <svg viewBox="0 0 5 3" className="w-[5px] h-[3px] ml-0.5 shrink-0" fill="#fff" aria-hidden="true"><path d="M0 0h5L2.500 3z" /></svg>
            )}
          </button>
        ))}
      </div>
      <div className="flex items-center w-[60px] gap-2.5">
        <div className="flex flex-col gap-px">
          {["M3 7l3-3 3 3", "M3 4l3 3 3-3"].map((d) => (
            <button key={d} aria-label="滚动" className="w-[14px] h-[13px] border border-[#2969de] bg-[#1851c6]">
              <svg viewBox="0 0 12 11" className="w-3 h-[11px]" fill="none" stroke="#fff" strokeWidth="2" aria-hidden="true"><path d={d} /></svg>
            </button>
          ))}
        </div>
        <Ico>
          <path d="M0 6h16v8H0z" fill="#000" />
          <path d="M1 8h14M1 10h14M3 12h10" stroke="#fff" strokeDasharray="1 1" />
          <path d="M6 6V3h5V2" fill="none" stroke="#000" />
        </Ico>
      </div>
      <div className="flex items-center h-full w-[131px] pl-2.5 gap-0.5 border-l border-[#0a3a9c] bg-linear-to-b from-[#31b6f7] via-[#109ae7] via-20% to-[#1086de]">
        <Ico>
          <path d="M2 2h12v12H2z" fill="#003900" />
          <path d="M2 4h12M2 7h12M2 10h12M2 13h12" stroke="#00b631" strokeDasharray="1 2" />
        </Ico>
        <Ico>
          <path d="M5 1h10v8H5z" fill="#8ccfff" stroke="#e7f3ff" />
          <path d="M1 6h9v7H1z" fill="#5aa6f7" stroke="#e7f3ff" />
          <path d="M3 15h6M9 11h5" stroke="#e7f3ff" strokeWidth="2" />
        </Ico>
        <Ico>
          <circle cx="7" cy="7" r="6" fill="#9c9e9c" stroke="#525152" shapeRendering="auto" />
          <circle cx="6" cy="7" r="3" fill="#e7e7e7" stroke="#525152" shapeRendering="auto" />
          <path d="M12 15l3-4" stroke="#dedfde" />
        </Ico>
        <Ico>
          <path d="M1 2h13v9H1z" fill="#000" />
          <path d="M2 4h4v3H2zM8 3h5v4H8z" fill="#adcfef" />
          <path d="M3 12h3v3H3zM10 9h5v5h-5z" fill="#29384a" />
          <path d="M7 12l3-3h4" fill="none" stroke="#fff" />
        </Ico>
        <time className="text-[12px] ml-2">8:09</time>
      </div>
    </footer>
  );
}

export default function App() {
  return (
    <div className={clsx("min-h-screen flex flex-col bg-[#5a9ee7] text-black overflow-hidden", CJK)}>
      <Titles />
      <main className="mr-1 bg-[#efebde]">
        <MenuBar />
        <ToolBar />
        <ActionBar />
        <Filters />
        <Tabs />
        <Grids />
        <WindowTabs />
        <StatusBar />
        <Taskbar />
      </main>
    </div>
  );
}
